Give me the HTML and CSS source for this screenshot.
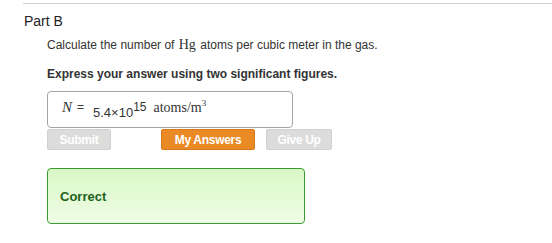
FILE: index.html
```html
<!DOCTYPE html>
<html>
<head>
<meta charset="utf-8">
<link rel="stylesheet" href="styles.css">
</head>
<body>
<div class="part">
  <div class="rule"></div>
  <h2 class="title">Part B</h2>
  <div class="body">
    <p class="q">Calculate the number of <span class="serif">Hg</span> atoms per cubic meter in the gas.</p>
    <p class="instr">Express your answer using two significant figures.</p>
    <div class="answer">
      <span class="var">N</span><span class="eq">=</span><span class="num">5.4×10<sup>15</sup></span><span class="unit">atoms/m<sup>3</sup></span>
    </div>
    <div class="buttons">
      <span class="btn disabled submit">Submit</span>
      <span class="btn orange">My Answers</span>
      <span class="btn disabled giveup">Give Up</span>
    </div>
    <div class="correct">Correct</div>
  </div>
</div>
</body>
</html>
```
FILE: styles.css
```css
html, body { margin: 0; padding: 0; background: #fff; }
body { font-family: "Liberation Sans", Arial, sans-serif; color: #333; }
.part { padding: 3px 0 0 23px; }
.rule { height: 1px; background: #cfcfcf; }
.title { margin: 9px 0 0 1px; font-size: 14px; font-weight: normal; line-height: 16px; color: #222; }
.body { padding-left: 24px; }
.q { margin: 9px 0 0 0; font-size: 12px; line-height: 14px; color: #333; }
.serif { font-family: "Liberation Serif", "Times New Roman", serif; font-size: 14px; margin: 0 1px; }
.instr { margin: 15px 0 0 0; font-size: 12px; font-weight: bold; line-height: 14px; color: #333; }
.answer { margin-top: 10px; width: 244px; height: 35px; border: 1px solid #a5a5a5; border-radius: 4px; box-sizing: content-box; display: flex; align-items: center; }
.var { font-family: "Liberation Serif", serif; font-style: italic; font-size: 15px; margin-left: 14px; margin-top: -4px; color: #333; }
.eq { font-size: 12px; margin-left: 5px; margin-top: -6px; }
.num { font-size: 13px; margin-left: 9px; margin-top: 6px; color: #333; }
.num sup { font-size: 12px; vertical-align: 0; position: relative; top: -6px; }
.unit { font-family: "Liberation Serif", serif; font-size: 14px; margin-left: 7px; margin-top: -3px; }
.unit sup { font-size: 9px; vertical-align: 0; position: relative; top: -6px; }
.buttons { display: flex; margin-top: 1px; height: 20px; }
.btn { display: flex; align-items: center; justify-content: center; height: 21px; border-radius: 2px; font-size: 12px; font-weight: bold; color: #fff; letter-spacing: -0.3px; }
.disabled { background: #dcdcdc; border: 1px solid #d0d0d0; box-sizing: border-box; }
.submit { width: 64px; }
.orange { background: #ea8a25; border: 1px solid #d7781b; box-sizing: border-box; width: 94px; margin-left: 50px; }
.giveup { width: 66px; margin-left: 11px; }
.correct { margin-top: 19px; width: 258px; height: 56px; box-sizing: border-box; border: 1px solid #3c9a32; border-radius: 4px; background: linear-gradient(#d8f8c6, #effde6); display: flex; align-items: center; padding-left: 12px; font-size: 13px; font-weight: bold; color: #1d621a; }
```
